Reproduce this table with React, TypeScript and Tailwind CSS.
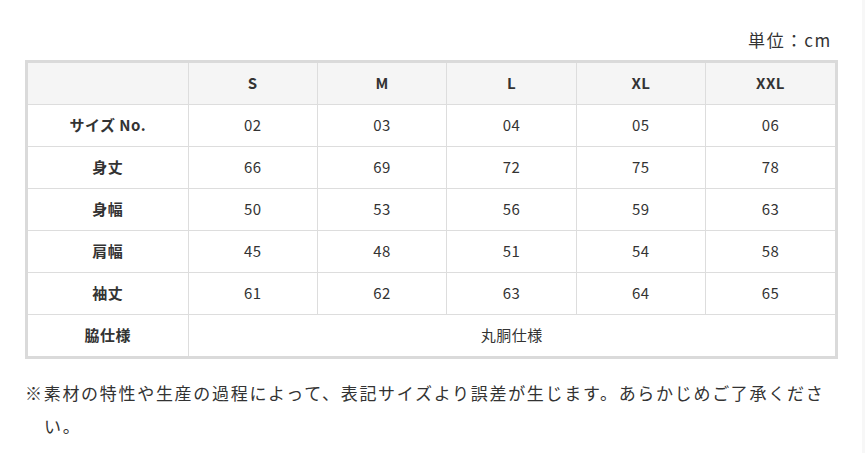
import React from 'react';

const sizes = ['S', 'M', 'L', 'XL', 'XXL'];

const rows: { label: string; values: string[] }[] = [
  { label: 'サイズ No.', values: ['02', '03', '04', '05', '06'] },
  { label: '身丈', values: ['66', '69', '72', '75', '78'] },
  { label: '身幅', values: ['50', '53', '56', '59', '63'] },
  { label: '肩幅', values: ['45', '48', '51', '54', '58'] },
  { label: '袖丈', values: ['61', '62', '63', '64', '65'] },
];

export default function App() {
  return (
    <div className="flex h-[453px] w-[865px] bg-white font-['Noto_Sans_CJK_JP','Noto_Sans',sans-serif] text-[#333]">
      <main className="flex-1 pl-[25px] pr-[24px] pt-[23px]">
        {/* unit label */}
        <p className="pr-[6px] text-right text-[17px] leading-[33px] tracking-[0.1em]">単位：cm</p>

        {/* size chart */}
        <div className="mt-[4px] border-[3px] border-[#dadada]">
          <table className="w-full table-fixed border-collapse text-center text-[15px] tracking-[0.03em]">
            <colgroup>
              <col className="w-[160px]" />
              {sizes.map((s) => (
                <col key={s} />
              ))}
            </colgroup>
            <thead>
              <tr className="h-[41px] bg-[#f5f5f5]">
                <th className="p-0" />
                {sizes.map((s) => (
                  <th key={s} className="border-l border-[#dddddd] p-0 font-bold">
                    {s}
                  </th>
                ))}
              </tr>
            </thead>
            <tbody>
              {rows.map((r) => (
                <tr key={r.label} className="h-[42px]">
                  <th className="border-t border-[#dddddd] p-0 font-bold">{r.label}</th>
                  {r.values.map((v, i) => (
                    <td key={i} className="border-t border-l border-[#dddddd] p-0">
                      {v}
                    </td>
                  ))}
                </tr>
              ))}
              <tr className="h-[42px]">
                <th className="border-t border-[#dddddd] p-0 font-bold">脇仕様</th>
                <td colSpan={5} className="border-t border-l border-[#dddddd] p-0">
                  丸胴仕様
                </td>
              </tr>
            </tbody>
          </table>
        </div>

        {/* note */}
        <p className="mt-[17px] pl-[19px] -indent-[19px] text-[17px] leading-[33px] tracking-[0.1em]">
          ※素材の特性や生産の過程によって、表記サイズより誤差が生じます。あらかじめご了承ください。
        </p>
      </main>
      <aside className="w-[3px] bg-[#f7f7f7]" />
    </div>
  );
}
